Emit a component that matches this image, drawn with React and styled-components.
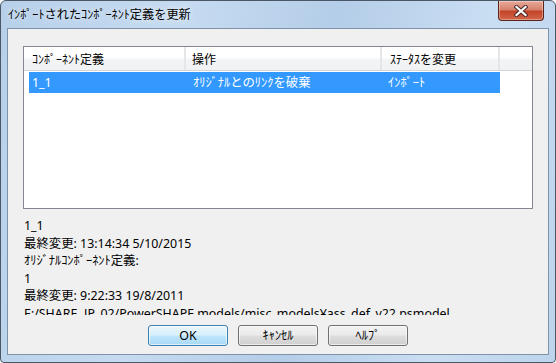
import React from "react";
import styled, { createGlobalStyle } from "styled-components";

const Global = createGlobalStyle`
  html, body { margin: 0; padding: 0; background: #ffffff; }
  * { box-sizing: border-box; }
`;

const Window = styled.div`
  width: 556px;
  height: 363px;
  border: 1px solid #4a5866;
  border-radius: 6px 6px 4px 4px;
  background: linear-gradient(100deg, #b7d0ea 0%, #c6dbf1 30%, #b4cde8 55%, #cadef3 80%, #bdd4ec 100%);
  padding: 0 6px 7px 6px;
  display: flex;
  flex-direction: column;
  font-family: "Noto Sans", "Noto Sans CJK JP", sans-serif;
  font-size: 12px;
  color: #000;
`;

const TitleBar = styled.div`
  height: 27px;
  display: flex;
  justify-content: space-between;
  align-items: flex-start;
`;

const Title = styled.div`
  padding: 5px 0 0 1px;
  font-family: "Noto Sans CJK JP", sans-serif;
  font-size: 12.2px;
  line-height: 16px;
  color: #000;
  text-shadow: 0 0 6px rgba(255, 255, 255, 0.9);
`;

const CloseButton = styled.div`
  width: 46px;
  height: 20px;
  margin-right: 5px;
  border: 1px solid #5b2318;
  border-top: none;
  border-radius: 0 0 4px 4px;
  background: linear-gradient(#e9a999 0%, #d7826e 45%, #c44428 55%, #d2664b 100%);
  box-shadow: inset 0 0 0 1px rgba(255, 255, 255, 0.35);
  display: flex;
  align-items: center;
  justify-content: center;
`;

const Client = styled.div`
  flex: 1;
  border: 1px solid #7f93a8;
  background: #f0f0f0;
  padding: 17px 15px 0 15px;
  display: flex;
  flex-direction: column;
`;

const ListView = styled.div`
  width: 510px;
  height: 163px;
  border: 1px solid #828790;
  background: #ffffff;
`;

const Header = styled.div`
  height: 24px;
  display: grid;
  grid-template-columns: 162px 196px 118px 1fr;
  border-bottom: 1px solid #d5d5d5;
  background: linear-gradient(#ffffff 0%, #ffffff 45%, #f3f4f6 55%, #f1f2f4 100%);
`;

const HeaderCell = styled.div`
  padding-left: ${(p) => p.$pad}px;
  border-right: 2px solid #e5e6e8;
  font-family: "Noto Sans CJK JP", sans-serif;
  font-size: 12px;
  line-height: 23px;
  white-space: nowrap;
  &:last-child { border-right: none; }
`;

const Row = styled.div`
  margin: 1px 0 0 5px;
  width: 471px;
  height: 21px;
  display: grid;
  grid-template-columns: 157px 196px 118px;
  background: ${(p) => (p.$selected ? "#3399ff" : "transparent")};
  color: ${(p) => (p.$selected ? "#ffffff" : "#000000")};
  font-size: 12.4px;
`;

const Cell = styled.div`
  padding-left: ${(p) => p.$pad}px;
  line-height: 21px;
  white-space: nowrap;
`;

const Details = styled.div`
  margin-top: 8px;
  height: 98px;
  overflow: hidden;
  padding-left: 1px;
  font-size: 12.4px;
`;

const Line = styled.div`
  line-height: 17.5px;
  height: 17.5px;
  white-space: nowrap;
`;

const Buttons = styled.div`
  margin-top: 10px;
  display: flex;
  justify-content: center;
  gap: 10px;
  margin-left: -15px;
  margin-right: -15px;
`;

const Button = styled.div`
  width: 80px;
  height: 21px;
  border: 1px solid ${(p) => (p.$default ? "#3c7fb1" : "#707070")};
  border-radius: 3px;
  background: ${(p) =>
    p.$default
      ? "linear-gradient(#eaf6fd 0%, #d9f0fc 45%, #bee6fd 55%, #a7d9f5 100%)"
      : "linear-gradient(#f2f2f2 0%, #ebebeb 45%, #dddddd 55%, #cfcfcf 100%)"};
  box-shadow: inset 0 0 0 1px rgba(255, 255, 255, 0.6);
  display: flex;
  align-items: center;
  justify-content: center;
  font-size: 12.4px;
  line-height: 19px;
`;

function CloseIcon() {
  return (
    <svg width="14" height="12" viewBox="0 0 14 12">
      <path d="M2.5 2 L11.5 10 M11.5 2 L2.5 10" stroke="#4a2a25" strokeWidth="4.2" strokeLinecap="square" />
      <path d="M2.5 2 L11.5 10 M11.5 2 L2.5 10" stroke="#ffffff" strokeWidth="2.2" strokeLinecap="square" />
    </svg>
  );
}

export default function App() {
  return (
    <>
      <Global />
      <Window>
        <TitleBar>
          <Title>ｲﾝﾎﾟｰﾄされたｺﾝﾎﾟｰﾈﾝﾄ定義を更新</Title>
          <CloseButton>
            <CloseIcon />
          </CloseButton>
        </TitleBar>
        <Client>
          <ListView>
            <Header>
              <HeaderCell $pad={8}>ｺﾝﾎﾟｰﾈﾝﾄ定義</HeaderCell>
              <HeaderCell $pad={6}>操作</HeaderCell>
              <HeaderCell $pad={8}>ｽﾃｰﾀｽを変更</HeaderCell>
              <HeaderCell $pad={0}></HeaderCell>
            </Header>
            <Row $selected>
              <Cell $pad={3}>1_1</Cell>
              <Cell $pad={7}>ｵﾘｼﾞﾅﾙとのﾘﾝｸを破棄</Cell>
              <Cell $pad={6}>ｲﾝﾎﾟｰﾄ</Cell>
            </Row>
          </ListView>
          <Details>
            <Line>1_1</Line>
            <Line>最終変更: 13:14:34 5/10/2015</Line>
            <Line>ｵﾘｼﾞﾅﾙｺﾝﾎﾟｰﾈﾝﾄ定義:</Line>
            <Line>1</Line>
            <Line>最終変更: 9:22:33 19/8/2011</Line>
            <Line>E:/SHARE_JP_02/PowerSHAPE models/misc_models¥ass_def_v22.psmodel</Line>
          </Details>
          <Buttons>
            <Button $default>OK</Button>
            <Button>ｷｬﾝｾﾙ</Button>
            <Button>ﾍﾙﾌﾟ</Button>
          </Buttons>
        </Client>
      </Window>
    </>
  );
}
